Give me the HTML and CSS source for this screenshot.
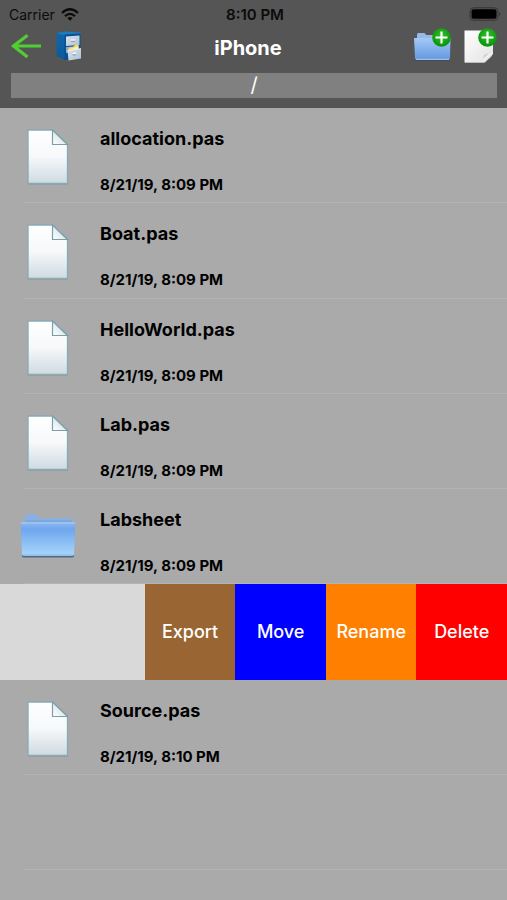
FILE: index.html
```html
<!DOCTYPE html>
<html lang="en">
<head>
<meta charset="utf-8">
<meta name="viewport" content="width=device-width, initial-scale=1">
<title>iPhone</title>
<link rel="stylesheet" href="styles.css">
</head>
<body>
<svg class="sprite" aria-hidden="true">
  <defs>
    <linearGradient id="paper" x1="0" y1="0" x2="0" y2="1"><stop offset="0" stop-color="#fff"/><stop offset=".5" stop-color="#f6f8fa"/><stop offset="1" stop-color="#cfdae1"/></linearGradient>
    <linearGradient id="fold" x1="0" y1="1" x2="1" y2="0"><stop offset="0" stop-color="#fff"/><stop offset=".45" stop-color="#e3ecef"/><stop offset="1" stop-color="#8fa7b0"/></linearGradient>
    <linearGradient id="folder-front" x1="0" y1="0" x2="0" y2="1"><stop offset="0" stop-color="#8db8f0"/><stop offset=".2" stop-color="#6fa7ee"/><stop offset="1" stop-color="#a9d6fb"/></linearGradient>
    <linearGradient id="add-front" x1="0" y1="0" x2="0" y2="1"><stop offset="0" stop-color="#a4c9f5"/><stop offset="1" stop-color="#6297e0"/></linearGradient>
    <linearGradient id="sheet" x1="0" y1="0" x2="1" y2="1"><stop offset="0" stop-color="#fff"/><stop offset="1" stop-color="#e2e2e2"/></linearGradient>
    <linearGradient id="curl" x1="0" y1="0" x2="1" y2="1"><stop offset="0" stop-color="#8a8a8a"/><stop offset=".45" stop-color="#f4f4f4"/><stop offset="1" stop-color="#999"/></linearGradient>
    <linearGradient id="cabinet-side" x1="0" y1="0" x2="0" y2="1"><stop offset="0" stop-color="#0f67ab"/><stop offset="1" stop-color="#0b5a9c"/></linearGradient>
    <linearGradient id="drawer" x1="0" y1="0" x2="1" y2="1"><stop offset="0" stop-color="#dbe5ee"/><stop offset="1" stop-color="#adc1d3"/></linearGradient>
    <radialGradient id="green" cx=".5" cy=".4" r=".6"><stop offset="0" stop-color="#2fc42a"/><stop offset="1" stop-color="#089008"/></radialGradient>
  </defs>
  <symbol id="file" viewBox="0 0 42 57">
    <path d="M1 2H26L41 16V56H1Z" fill="#7d8f96" opacity=".4"/>
    <path d="M1 1H25.500L40.500 15.500V54.500H1Z" fill="url(#paper)" stroke="#86abb5" stroke-width="1.300"/>
    <path d="M25.500 1V15.500H40.500Z" fill="url(#fold)" stroke="#7a9fa9" stroke-width="1.200"/>
  </symbol>
  <symbol id="folder" viewBox="0 0 56 45">
    <path d="M4.500 10V3.500Q4.500 1 7 1H15Q17 1 18 3L19 5H50Q52 5 52 7V11H4.500Z" fill="#8bafdf"/>
    <path d="M5 8H52" stroke="#76a0d8"/>
    <path d="M2 42H54V43Q54 44.500 52 44.500H4Q2 44.500 2 43Z" fill="#4f6680"/>
    <path d="M.5 9.500H55.500L54 41Q54 43 52 43H4Q2 43 2 41Z" fill="url(#folder-front)"/>
    <path d="M1 10H55" stroke="#a9ccf5"/>
    <path d="M3 42H53" stroke="#7fb3e2"/>
  </symbol>
  <symbol id="plus" viewBox="0 0 20 20">
    <circle cx="10" cy="10" r="9.300" fill="url(#green)"/>
    <path d="M10 4V16M4 10H16" stroke="#fff" stroke-width="2.200"/>
  </symbol>
</svg>

<header class="header">
  <div class="status">
    <span class="carrier">Carrier
      <svg class="wifi" viewBox="0 0 18 13" aria-hidden="true">
        <g fill="none" stroke="#0b0b0b" stroke-width="2.300"><path d="M1 5Q9-2.400 17 5"/><path d="M4 8.200Q9 3.600 14 8.200"/></g>
        <path d="M6.300 10Q9 7.800 11.700 10L9 12.700Z" fill="#0b0b0b"/>
      </svg>
    </span>
    <time class="clock">8:10 PM</time>
    <svg class="battery" viewBox="0 0 32 14" aria-hidden="true">
      <rect x="1" y=".8" width="28" height="12.400" rx="3.500" fill="none" stroke="#343434"/>
      <rect x="2.500" y="2.300" width="25" height="9.400" rx="2" fill="#000"/>
      <path d="M30.300 4.700Q32.500 7 30.300 9.300Z" fill="#343434"/>
    </svg>
  </div>
  <nav class="nav">
    <div class="tools">
      <button class="tool" type="button" aria-label="Back">
        <svg class="back" viewBox="0 0 32 36"><path d="M30 18H2.500M16.500 7.300L2.500 18L16.500 29" fill="none" stroke="#50cf32" stroke-width="3.200"/></svg>
      </button>
      <button class="tool" type="button" aria-label="Files">
        <svg class="cabinet" viewBox="0 0 26 36">
          <path d="M.5 5L9 7V32L.5 28Z" fill="url(#cabinet-side)"/>
          <path d="M.5 5L8 3.500L24.500 4.500V6.500L9 7.500Z" fill="#1d7cbd"/>
          <path d="M8.500 6.500L24.500 5.500V30L8.500 32Z" fill="#0b4f91"/>
          <path d="M10 8.500L23.500 7.500V17L10 18Z" fill="url(#drawer)"/>
          <path d="M10 19L23 18V24L10 25Z" fill="#8eabc3"/>
          <path d="M15 11.500L19 11.200V13H15Z" fill="#f4f8fb"/>
          <path d="M15 13.300H19" stroke="#6d8599" stroke-width=".8"/>
          <path d="M12 22L13 19.500L17 19L19 17L22.500 16.500V21L12 24Z" fill="#f8da68"/>
          <path d="M13 21.500L22 18.500V21Z" fill="#fff0a8"/>
          <path d="M11.500 22.500L25 20.500V30.500L12.500 32.500Z" fill="url(#drawer)"/>
          <path d="M11.500 22.700L25 20.700" stroke="#f2f6fa" stroke-width=".8"/>
          <path d="M16.500 25L20 24.600V26.300H16.500Z" fill="#fff"/>
          <path d="M16.500 26.800H20" stroke="#6d8599" stroke-width=".8"/>
        </svg>
      </button>
    </div>
    <h1 class="title">iPhone</h1>
    <div class="tools">
      <button class="tool" type="button" aria-label="New folder">
        <svg class="add-folder" viewBox="0 0 37 36">
          <path d="M3 10V6.500Q3 5 4.500 5H10Q11.500 5 12 7H34V12H3Z" fill="#97b9e5"/>
          <path d="M1 31H36V33H1Z" fill="#424b57"/>
          <path d="M0 10H36.500L36 30Q36 32 34 32H3Q1 32 1 30Z" fill="url(#add-front)"/>
          <path d="M2 31.300H35" stroke="#a9cdf2"/>
          <use href="#plus" x="17.500" y="-.5" width="20" height="20"/>
        </svg>
      </button>
      <button class="tool" type="button" aria-label="New file">
        <svg class="add-file" viewBox="0 0 33 36">
          <path d="M.5 2.500H29V26L21 34.500H.5Z" fill="url(#sheet)"/>
          <path d="M1 34.500H20" stroke="#bbb"/>
          <path d="M18 34.500Q20 31 19.500 28Q21 25 29 24.500Q28 31 18 34.500Z" fill="url(#curl)"/>
          <use href="#plus" x="13.500" y="-.5" width="20" height="20"/>
        </svg>
      </button>
    </div>
  </nav>
  <div class="path">/</div>
</header>

<main class="list">
  <article class="row">
    <svg class="icon file"><use href="#file"/></svg>
    <div class="info"><h2 class="name">allocation.pas</h2><time class="date">8/21/19, 8:09 PM</time></div>
  </article>
  <article class="row">
    <svg class="icon file"><use href="#file"/></svg>
    <div class="info"><h2 class="name">Boat.pas</h2><time class="date">8/21/19, 8:09 PM</time></div>
  </article>
  <article class="row">
    <svg class="icon file"><use href="#file"/></svg>
    <div class="info"><h2 class="name">HelloWorld.pas</h2><time class="date">8/21/19, 8:09 PM</time></div>
  </article>
  <article class="row">
    <svg class="icon file"><use href="#file"/></svg>
    <div class="info"><h2 class="name">Lab.pas</h2><time class="date">8/21/19, 8:09 PM</time></div>
  </article>
  <article class="row">
    <svg class="icon folder"><use href="#folder"/></svg>
    <div class="info"><h2 class="name">Labsheet</h2><time class="date">8/21/19, 8:09 PM</time></div>
  </article>
  <div class="actions">
    <button class="action export" type="button">Export</button>
    <button class="action move" type="button">Move</button>
    <button class="action rename" type="button">Rename</button>
    <button class="action delete" type="button">Delete</button>
  </div>
  <article class="row">
    <svg class="icon file"><use href="#file"/></svg>
    <div class="info"><h2 class="name">Source.pas</h2><time class="date">8/21/19, 8:10 PM</time></div>
  </article>
  <div class="row"></div>
</main>
</body>
</html>
```

FILE: styles.css
```css
* {
  box-sizing: border-box;
}

body {
  display: flex;
  flex-direction: column;
  min-height: 100vh;
  margin: 0;
  background: #aaa;
  color: #000;
  font-family: Inter, "Liberation Sans", sans-serif;
}

svg {
  display: block;
}

.sprite {
  position: absolute;
  width: 0;
  height: 0;
}

.header {
  padding-bottom: 10px;
  background: #555;
}

.status {
  display: grid;
  grid-template-columns: 1fr auto 1fr;
  align-items: center;
  height: 28px;
  padding: 0 6px 0 9px;
  color: #0b0b0b;
  font-size: 14px;
}

.carrier {
  display: flex;
  align-items: center;
  gap: 6px;
}

.wifi {
  width: 18px;
  height: 13px;
}

.clock {
  font-size: 15px;
  font-weight: 600;
}

.battery {
  justify-self: end;
  width: 32px;
  height: 14px;
}

.nav {
  display: flex;
  align-items: center;
  justify-content: space-between;
  height: 45px;
  padding: 0 10px 9px 11px;
}

.tools {
  display: flex;
  gap: 13px;
}

.tool {
  padding: 0;
  border: 0;
  background: none;
}

.tool svg {
  height: 36px;
  overflow: visible;
}

.back {
  width: 32px;
}

.cabinet {
  width: 26px;
}

.add-folder {
  width: 37px;
}

.add-file {
  width: 33px;
}

.title {
  margin: 4px 0 0;
  color: #fff;
  font-size: 20px;
  font-weight: 700;
  line-height: 24px;
}

.path {
  margin: 0 10px 0 11px;
  background: #808080;
  color: #fff;
  font-size: 20px;
  line-height: 25px;
  text-align: center;
}

.list {
  display: grid;
  flex: 1;
  grid-auto-rows: 1fr;
  padding-bottom: 30px;
}

.row {
  display: flex;
  margin-left: 24px;
  border-bottom: 1px solid #b4b4b4;
}

.icon {
  flex: none;
}

.icon.file {
  width: 42px;
  height: 57px;
  margin: 21px 31px 0 3px;
}

.icon.folder {
  width: 56px;
  height: 45px;
  margin: 24px 24px 0 -4px;
}

.info {
  display: flex;
  flex-direction: column;
  gap: 24px;
  padding-top: 19px;
}

.name {
  margin: 0;
  font-size: 18px;
  font-weight: 700;
  line-height: 24px;
}

.date {
  font-size: 15px;
  font-weight: 700;
  line-height: 20px;
}

.actions {
  display: grid;
  grid-template-columns: 1.6fr repeat(4, 1fr);
  background: #d9d9d9;
}

.action {
  min-width: 0;
  padding: 0;
  border: 0;
  color: #fff;
  font: 500 18px/24px Inter, "Liberation Sans", sans-serif;
}

.export {
  grid-column: 2;
  background: #963;
}

.move {
  background: #00f;
}

.rename {
  background: #ff8000;
}

.delete {
  background: #f00;
}
```
